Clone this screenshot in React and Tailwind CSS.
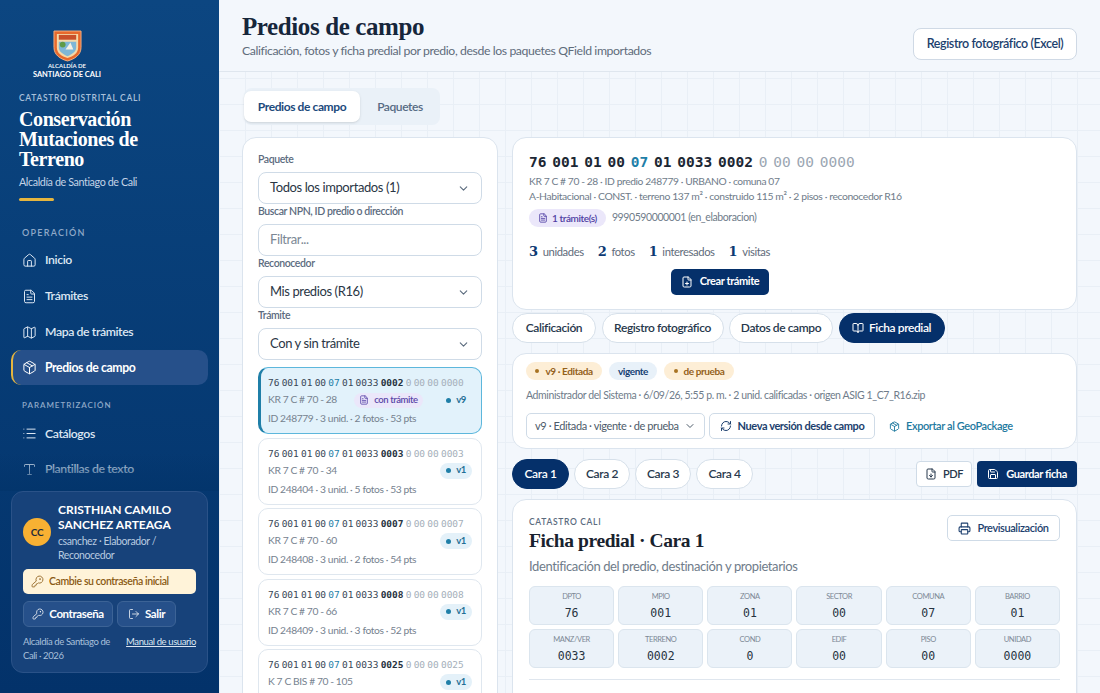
import {
  BookOpen,
  ChevronDown,
  FileDown,
  FilePlus,
  FileText,
  House,
  KeyRound,
  List,
  LogOut,
  Map,
  Package,
  Printer,
  RefreshCw,
  Save,
  Type,
} from "lucide-react";

const sans = "font-['Lato','Noto_Sans',sans-serif]";
const serif = "font-['Liberation_Serif','DejaVu_Serif',serif]";
const mono = "font-['DejaVu_Sans_Mono','Liberation_Mono',monospace]";

const predios = [
  { key: "0002", tail: "0000", addr: "KR 7 C # 70 - 28", info: "ID 248779 · 3 unid. · 2 fotos · 53 pts", v: "v9", active: true },
  { key: "0003", tail: "0003", addr: "KR 7 C # 70 - 34", info: "ID 248404 · 3 unid. · 5 fotos · 53 pts", v: "v1" },
  { key: "0007", tail: "0007", addr: "KR 7 C # 70 - 60", info: "ID 248408 · 3 unid. · 2 fotos · 54 pts", v: "v1" },
  { key: "0008", tail: "0008", addr: "KR 7 C # 70 - 66", info: "ID 248409 · 3 unid. · 3 fotos · 52 pts", v: "v1" },
  { key: "0025", tail: "0025", addr: "K 7 C BIS # 70 - 105", v: "v1" },
];

const celdas = [
  ["DPTO", "76"], ["MPIO", "001"], ["ZONA", "01"], ["SECTOR", "00"], ["COMUNA", "07"], ["BARRIO", "01"],
  ["MANZ/VER", "0033"], ["TERRENO", "0002"], ["COND", "0"], ["EDIF", "00"], ["PISO", "00"], ["UNIDAD", "0000"],
];

function Logo() {
  return (
    <div className="flex w-[96px] flex-col items-center">
      <svg width="29" height="32" viewBox="0 0 30 33">
        <path d="M1 1h28v17c0 8-7 12-14 14C8 30 1 26 1 18z" fill="#e8692c" stroke="#f3b083" />
        <path d="M4 4h22v14c0 6-5 9-11 11C9 27 4 24 4 18z" fill="#f4d9a8" />
        <rect x="6" y="5" width="18" height="5" fill="#c9502a" />
        <path d="M6 12h18v6c0 4-4 7-9 9-5-2-9-5-9-9z" fill="#7fb7d6" />
        <circle cx="10" cy="15" r="3" fill="#5f9a45" />
        <path d="M13 20l5-7 3 7z" fill="#f6f1e3" />
      </svg>
      <span className="text-[6px] leading-[8px] font-semibold tracking-normal text-white">ALCALDÍA DE</span>
      <span className="text-[7.5px] leading-[9px] font-bold tracking-normal text-white">SANTIAGO DE CALI</span>
    </div>
  );
}

function NavItem({ icon: Icon, label, active }) {
  return (
    <div
      className={`flex h-[35px] items-center gap-[8px] rounded-[10px] text-[12.25px] ${
        active
          ? "border-l-2 border-[#e5b53f] bg-[#26508a] pl-[9px] font-bold text-white"
          : "pl-[11px] font-semibold text-[#dde7f3]"
      }`}
    >
      <Icon size={15} strokeWidth={1.6} />
      <span>{label}</span>
    </div>
  );
}

function Sidebar() {
  return (
    <aside className="flex h-full w-[219px] shrink-0 flex-col bg-gradient-to-b from-[#0c4681] to-[#03326a]">
      <div className="px-[19px] pt-[30px]">
        <Logo />
        <div className="mt-[13px] text-[8.5px] leading-3 font-semibold tracking-[0.08em] text-[#a9c0da]">
          CATASTRO DISTRITAL CALI
        </div>
        <h1 className={`${serif} mt-[5px] text-[20px] leading-[20px] font-bold text-white`}>
          Conservación Mutaciones de Terreno
        </h1>
        <div className="mt-[5px] text-[10.75px] leading-4 text-[#c3d3e6]">Alcaldía de Santiago de Cali</div>
        <div className="mt-[8px] h-[3px] w-[35px] rounded bg-[#e5b53f]" />
      </div>
      <nav className="relative mt-[26px] min-h-0 flex-1 overflow-hidden px-[11px]">
        <div className="px-[11px] text-[9px] leading-3 font-semibold tracking-[0.14em] text-[#8fa9c8]">OPERACIÓN</div>
        <div className="mt-[4px] flex flex-col gap-[0.75px]">
          <NavItem icon={House} label="Inicio" />
          <NavItem icon={FileText} label="Trámites" />
          <NavItem icon={Map} label="Mapa de trámites" />
          <NavItem icon={Package} label="Predios de campo" active />
        </div>
        <div className="mt-[14px] px-[11px] text-[8px] leading-3 font-semibold tracking-[0.12em] text-[#8fa9c8]">
          PARAMETRIZACIÓN
        </div>
        <div className="mt-[5px] flex flex-col gap-[0.75px]">
          <NavItem icon={List} label="Catálogos" />
          <NavItem icon={Type} label="Plantillas de texto" />
        </div>
        <div className="absolute right-0 bottom-0 left-0 h-[38px] bg-gradient-to-b from-transparent to-[#03356c]" />
      </nav>
      <div className="mx-[11px] mb-[20px] rounded-[12px] border border-[#2a5288] bg-[#17427a] px-[11px] pt-[10px] pb-[9px]">
        <div className="flex items-center gap-[7px]">
          <div className="flex h-[28px] w-[28px] shrink-0 items-center justify-center rounded-full bg-[#f8b133] text-[10px] font-bold text-[#1d2a3a]">
            CC
          </div>
          <div className="min-w-0">
            <div className="text-[12px] leading-[15px] font-bold tracking-normal text-white">CRISTHIAN CAMILO SANCHEZ ARTEAGA</div>
            <div className="mt-[2px] text-[10.5px] leading-[14px] text-[#b9cbe0]">csanchez · Elaborador / Reconocedor</div>
          </div>
        </div>
        <div className="mt-[7px] flex h-[25px] items-center gap-[5px] rounded-[5px] bg-[#fff3d9] pl-[8px] text-[10.5px] font-semibold text-[#8a5a14]">
          <KeyRound size={13} strokeWidth={1.5} />
          Cambie su contraseña inicial
        </div>
        <div className="mt-[7px] flex gap-[4px]">
          <div className="flex h-[26px] w-[90px] items-center justify-center gap-[5px] rounded-[6px] border border-[#3c6396] bg-[#26508a] text-[11.5px] font-bold text-white">
            <KeyRound size={12} strokeWidth={1.5} />
            Contraseña
          </div>
          <div className="flex h-[26px] w-[59px] items-center justify-center gap-[5px] rounded-[6px] border border-[#3c6396] bg-[#26508a] text-[11.5px] font-bold text-white">
            <LogOut size={12} strokeWidth={1.5} />
            Salir
          </div>
        </div>
        <div className="mt-[8px] flex justify-between text-[9.5px] leading-[14px] text-[#a9c0da]">
          <span className="w-[94px]">Alcaldía de Santiago de Cali · 2026</span>
          <span className="whitespace-nowrap text-[#dbe6f2] underline">Manual de usuario</span>
        </div>
      </div>
    </aside>
  );
}

function Npn({ k, tail, comuna = "text-[#1f7fa8]", strong, muted, gap, className }) {
  return (
    <div className={`${mono} flex tracking-normal whitespace-nowrap ${gap} ${className}`}>
      {["76", "001", "01", "00"].map((s, i) => (
        <span key={i}>{s}</span>
      ))}
      <span className={comuna}>07</span>
      <span>01</span>
      <span>0033</span>
      <span className={strong}>{k}</span>
      {["0", "00", "00", tail].map((s, i) => (
        <span key={i} className={muted}>
          {s}
        </span>
      ))}
    </div>
  );
}

function Field({ label, value, placeholder }) {
  return (
    <div>
      <div className="mb-[6px] text-[10.5px] leading-[13px] font-semibold text-[#5b6b7e]">{label}</div>
      <div className="flex h-[32px] items-center justify-between rounded-[8px] border border-[#cfdbe7] bg-white pr-[11px] pl-[11px] text-[13px]">
        {placeholder ? <span className="text-[#7b8794]">{placeholder}</span> : <span className="text-[#2a3645]">{value}</span>}
        {!placeholder && <ChevronDown size={13} className="text-[#5b6b7e]" />}
      </div>
    </div>
  );
}

function VBadge({ v, active }) {
  return (
    <span
      className={`flex h-[16px] w-[32px] items-center justify-center gap-[5px] rounded-full text-[9.5px] font-bold text-[#1f6f96] ${
        active ? "" : "bg-[#e4f1f9]"
      }`}
    >
      <span className="h-[5px] w-[5px] rounded-full bg-[#1f7fa8]" />
      {v}
    </span>
  );
}

function PredioRow({ p }) {
  return (
    <div
      className={`h-[67px] shrink-0 rounded-[10px] border pt-[8px] pr-[9px] ${
        p.active ? "border-[#5db7dc] border-l-[3px] border-l-[#1f7fa8] bg-[#e2f2fb] pl-[7px]" : "border-[#dfe7ef] bg-white pl-[9px]"
      }`}
    >
      <Npn
        k={p.key}
        tail={p.tail}
        strong="font-bold text-[#27333f]"
        muted="text-[#a5afba]"
        gap="gap-[2.2px]"
        className="text-[9.5px] leading-[13px] text-[#394756]"
      />
      <div className="mt-[3px] flex h-[16px] items-center justify-between text-[10.25px] text-[#76828f]">
        <span>{p.addr}</span>
        {p.active && (
          <span className="flex h-[15px] items-center gap-[5px] rounded-full bg-[#ebe7fa] px-[5px] text-[9.5px] font-semibold text-[#5a46a8]">
            <FileText size={10} />
            con trámite
          </span>
        )}
        <VBadge v={p.v} active={p.active} />
      </div>
      {p.info && <div className="mt-[3px] text-[10.25px] leading-[14px] text-[#76828f]">{p.info}</div>}
    </div>
  );
}

function LeftPanel() {
  return (
    <section className="h-[700px] w-[256px] shrink-0 rounded-t-[14px] border border-[#dbe4ee] bg-white px-[15px] pt-[15px]">
      <div className="flex flex-col gap-[1px]">
        <Field label="Paquete" value="Todos los importados (1)" />
        <Field label="Buscar NPN, ID predio o dirección" placeholder="Filtrar..." />
        <Field label="Reconocedor" value="Mis predios (R16)" />
        <Field label="Trámite" value="Con y sin trámite" />
      </div>
      <div className="mt-[7px] flex flex-col gap-[3.5px]">
        {predios.map((p) => (
          <PredioRow key={p.key} p={p} />
        ))}
      </div>
    </section>
  );
}

function Stat({ n, label }) {
  return (
    <span className="flex items-baseline gap-[5px] text-[11.25px] text-[#5f6c7b]">
      <b className="font-['DejaVu_Serif',serif] text-[13px] text-[#0d3a73]">{n}</b>
      {label}
    </span>
  );
}

function PillTab({ label, active, icon: Icon, width }) {
  return (
    <div
      className={`flex h-[30px] items-center justify-center gap-[5px] rounded-full border text-[12px] font-semibold ${width} ${
        active ? "border-[#05306a] bg-[#05306a] text-white" : "border-[#d6e0ea] bg-white text-[#27384c]"
      }`}
    >
      {Icon && <Icon size={12} />}
      {label}
    </div>
  );
}

function Dot({ children, width }) {
  return (
    <span className={`flex h-[18px] items-center justify-center gap-[6px] rounded-full bg-[#fdeed6] text-[10px] font-bold text-[#94611b] ${width}`}>
      <span className="h-[4px] w-[4px] rounded-full bg-[#a87322]" />
      {children}
    </span>
  );
}

function RightPanel() {
  return (
    <div className="min-w-0 flex-1">
      <div className="flex h-[173px] flex-col rounded-[14px] border border-[#dbe4ee] bg-white px-[16px] pt-[15px]">
        <Npn
          k="0002"
          tail="0000"
          strong=""
          muted="font-normal text-[#9ba6b2]"
          gap="gap-[5.8px]"
          className="text-[14.5px] leading-[18px] font-bold text-[#1c2734]"
        />
        <div className="mt-[3px] text-[10.25px] leading-[15px] text-[#6f7c8a]">
          KR 7 C # 70 - 28 · ID predio 248779 · URBANO · comuna 07
        </div>
        <div className="text-[10.4px] leading-[15px] text-[#6f7c8a]">
          A-Habitacional · CONST. · terreno 137 m² · construido 115 m² · 2 pisos · reconocedor R16
        </div>
        <div className="mt-[5px] flex items-center gap-[6px]">
          <span className="flex h-[18px] items-center gap-[4px] rounded-full bg-[#ebe7fa] px-[9px] text-[10px] font-semibold text-[#4f3ea3]">
            <FileText size={10} />
            1 trámite(s)
          </span>
          <span className="text-[10.5px] text-[#6f7c8a]">9990590000001 (en_elaboracion)</span>
        </div>
        <div className="mt-[15px] flex gap-[14px]">
          <Stat n="3" label="unidades" />
          <Stat n="2" label="fotos" />
          <Stat n="1" label="interesados" />
          <Stat n="1" label="visitas" />
        </div>
        <div className="mt-[7px] flex pl-[142px]">
          <div className="flex h-[26px] w-[98px] items-center justify-center gap-[7px] rounded-[5px] bg-[#05306a] text-[11px] font-bold text-white">
            <FilePlus size={12} />
            Crear trámite
          </div>
        </div>
      </div>

      <div className="mt-[3px] flex gap-[5.5px]">
        <PillTab label="Calificación" width="w-[84px]" />
        <PillTab label="Registro fotográfico" width="w-[122px]" />
        <PillTab label="Datos de campo" width="w-[104px]" />
        <PillTab label="Ficha predial" icon={BookOpen} active width="w-[106px]" />
      </div>

      <div className="mt-[10px] h-[96px] rounded-[14px] border border-[#dbe4ee] bg-white px-[13px] pt-[8px]">
        <div className="flex gap-[7px]">
          <Dot width="w-[76px]">v9 · Editada</Dot>
          <span className="flex h-[18px] w-[48px] items-center justify-center rounded-full bg-[#e8f1f9] text-[10px] font-bold text-[#153f73]">vigente</span>
          <Dot width="w-[70px]">de prueba</Dot>
        </div>
        <div className="mt-[8px] text-[10.5px] leading-[15px] text-[#6f7c8a]">
          Administrador del Sistema · 6/09/26, 5:55 p. m. · 2 unid. calificadas · origen ASIG 1_C7_R16.zip
        </div>
        <div className="mt-[10px] flex items-center">
          <div className="flex h-[26px] w-[179px] items-center justify-between rounded-[5px] border border-[#cfdbe7] px-[8px] text-[11px] whitespace-nowrap text-[#4d5b6a]">
            v9 · Editada · vigente · de prueba
            <ChevronDown size={12} />
          </div>
          <div className="ml-[4px] flex h-[26px] w-[166px] items-center justify-center gap-[6px] rounded-[5px] border border-[#cfdbe7] text-[11px] font-bold text-[#1c3f6e]">
            <RefreshCw size={12} />
            Nueva versión desde campo
          </div>
          <div className="ml-[14px] flex items-center gap-[6px] text-[11px] font-semibold text-[#1f7a9f]">
            <Package size={11} />
            Exportar al GeoPackage
          </div>
        </div>
      </div>

      <div className="mt-[10px] flex items-center gap-[5px]">
        <PillTab label="Cara 1" active width="w-[57px]" />
        <PillTab label="Cara 2" width="w-[56px]" />
        <PillTab label="Cara 3" width="w-[56px]" />
        <PillTab label="Cara 4" width="w-[57px]" />
        <div className="ml-auto flex h-[26px] w-[56px] items-center justify-center gap-[6px] rounded-[4px] border border-[#cfdbe7] bg-white text-[11px] font-semibold text-[#27384c]">
          <FileDown size={12} />
          PDF
        </div>
        <div className="flex h-[26px] w-[100px] items-center justify-center gap-[7px] rounded-[4px] bg-[#05306a] text-[11px] font-bold text-white">
          <Save size={12} />
          Guardar ficha
        </div>
      </div>

      <div className="mt-[10px] h-[300px] rounded-t-[14px] border border-[#dbe4ee] bg-white px-[16px] pt-[15px]">
        <div className="flex items-start justify-between">
          <div className="pt-[1px]">
            <div className="text-[8.5px] leading-[12px] font-semibold tracking-[0.08em] text-[#5b6b7e]">CATASTRO CALI</div>
            <div className={`${serif} mt-[1px] text-[19.5px] leading-[24px] font-bold text-[#18222e]`}>Ficha predial · Cara 1</div>
          </div>
          <div className="flex h-[26px] w-[113px] items-center justify-center gap-[6px] rounded-[5px] border border-[#cfdbe7] text-[11px] font-semibold text-[#1c3f6e]">
            <Printer size={13} />
            Previsualización
          </div>
        </div>
        <div className="mt-[4px] text-[13px] leading-[18px] text-[#6f7c8a]">Identificación del predio, destinación y propietarios</div>
        <div className="mt-[11px] grid grid-cols-6 gap-[4px]">
          {celdas.map(([k, v]) => (
            <div key={k} className="flex h-[39px] flex-col items-center rounded-[6px] border border-[#dbe5ee] bg-[#ebf2f9] pt-[4px]">
              <span className="text-[7.5px] leading-[11px] text-[#7c8895]">{k}</span>
              <span className={`${mono} mt-[3px] text-[11.5px] leading-[16px] tracking-normal text-[#27333f]`}>{v}</span>
            </div>
          ))}
        </div>
        <div className="mt-[11px] border-t border-[#dfe6ee]" />
      </div>
    </div>
  );
}

export default function App() {
  return (
    <div className={`${sans} flex h-screen overflow-hidden bg-[#f3f7fc] tracking-[-0.025em]`}>
      <Sidebar />
      <main className="min-w-0 flex-1 overflow-hidden bg-[linear-gradient(#e9eff6_1px,transparent_1px),linear-gradient(90deg,#e9eff6_1px,transparent_1px)] bg-[size:26px_26px]">
        <header className="flex h-[72px] justify-between border-b border-[#dfe6ee] bg-[#f3f7fc] px-[23px] pt-[12px]">
          <div>
            <h2 className={`${serif} text-[25px] leading-[30px] font-bold text-[#16263b]`}>Predios de campo</h2>
            <p className="mt-[1px] text-[12.25px] leading-[16px] text-[#5f6c7b]">
              Calificación, fotos y ficha predial por predio, desde los paquetes QField importados
            </p>
          </div>
          <div className="mt-[16px] flex h-[32px] w-[164px] items-center justify-center rounded-[8px] border border-[#cfd9e5] bg-white text-[12.5px] font-semibold text-[#1c3f6e]">
            Registro fotográfico (Excel)
          </div>
        </header>
        <div className="pt-[16px] pr-[23px] pl-[23px]">
          <div className="ml-[2px] flex h-[37px] w-[196px] items-start rounded-[8px] bg-[#eaf1f8] pt-[3px]">
            <div className="flex h-[31px] w-[116px] items-center justify-center rounded-[7px] bg-white text-[12px] font-bold text-[#1c4a7c] shadow-sm">
              Predios de campo
            </div>
            <div className="flex h-[31px] flex-1 items-center justify-center text-[12px] font-semibold text-[#566b84]">Paquetes</div>
          </div>
          <div className="mt-[12px] flex gap-[14px]">
            <LeftPanel />
            <RightPanel />
          </div>
        </div>
      </main>
    </div>
  );
}
